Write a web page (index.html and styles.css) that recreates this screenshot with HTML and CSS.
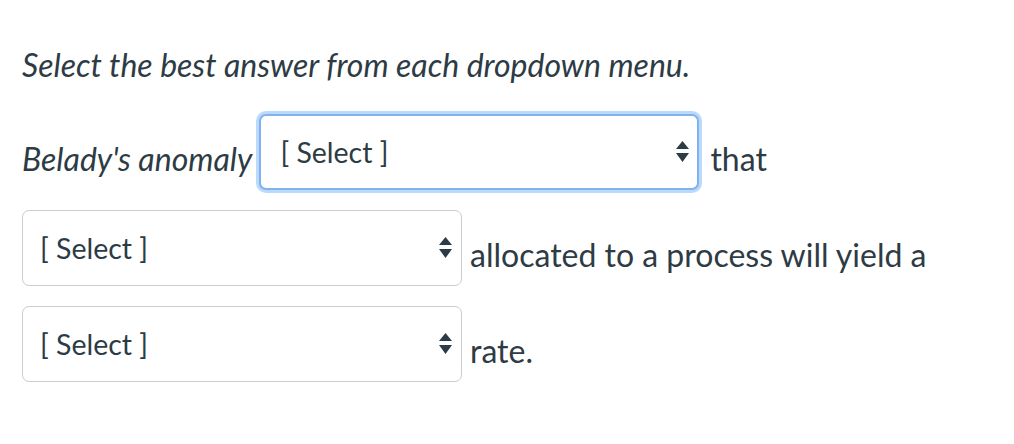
FILE: index.html
```html
<!DOCTYPE html>
<html>
<head>
<meta charset="utf-8">
<link rel="stylesheet" href="styles.css">
</head>
<body>
<div class="question">
  <p class="prompt">Select the best answer from each dropdown menu.</p>
  <p class="text"><em>Belady's anomaly</em><span class="select focused"><span class="label">[ Select ]</span><svg class="arrows" width="13" height="22" viewBox="0 0 13 22"><path d="M6.5 0 L13 8 L0 8 Z M0 12 L13 12 L6.5 21 Z" fill="#2d3b45"/></svg></span>that <span class="select"><span class="label">[ Select ]</span><svg class="arrows" width="13" height="22" viewBox="0 0 13 22"><path d="M6.5 0 L13 8 L0 8 Z M0 12 L13 12 L6.5 21 Z" fill="#2d3b45"/></svg></span>allocated to a process will yield a <span class="select"><span class="label">[ Select ]</span><svg class="arrows" width="13" height="22" viewBox="0 0 13 22"><path d="M6.5 0 L13 8 L0 8 Z M0 12 L13 12 L6.5 21 Z" fill="#2d3b45"/></svg></span>rate.</p>
</div>
</body>
</html>
```

FILE: styles.css
```css
html, body {
  margin: 0;
  padding: 0;
  background: #ffffff;
}
body {
  font-family: Lato, "Noto Sans", sans-serif;
  color: #2d3b45;
}
.question {
  padding: 0 22px;
}
.prompt {
  margin: 0;
  padding-top: 45px;
  font-size: 32px;
  font-style: italic;
  line-height: 40px;
}
.text {
  margin: 19px 0 0;
  font-size: 32px;
  line-height: 40px;
  width: 960px;
}
.text em {
  font-style: italic;
}
.select {
  display: inline-flex;
  align-items: center;
  justify-content: space-between;
  box-sizing: border-box;
  width: 440px;
  height: 76px;
  margin: 10px 8px 10px 0;
  padding: 0 9px 0 17px;
  border: 1px solid #c7cdd1;
  border-radius: 7px;
  vertical-align: 8px;
  font-size: 28.5px;
  line-height: normal;
  background: #fff;
}
.select.focused {
  margin-left: 7px;
  margin-right: 11px;
  border: 2px solid #7fb2f2;
  box-shadow: 0 0 0 3px #bcd8fb;
  padding: 0 8px 0 19px;
}
.arrows {
  display: block;
}
```
